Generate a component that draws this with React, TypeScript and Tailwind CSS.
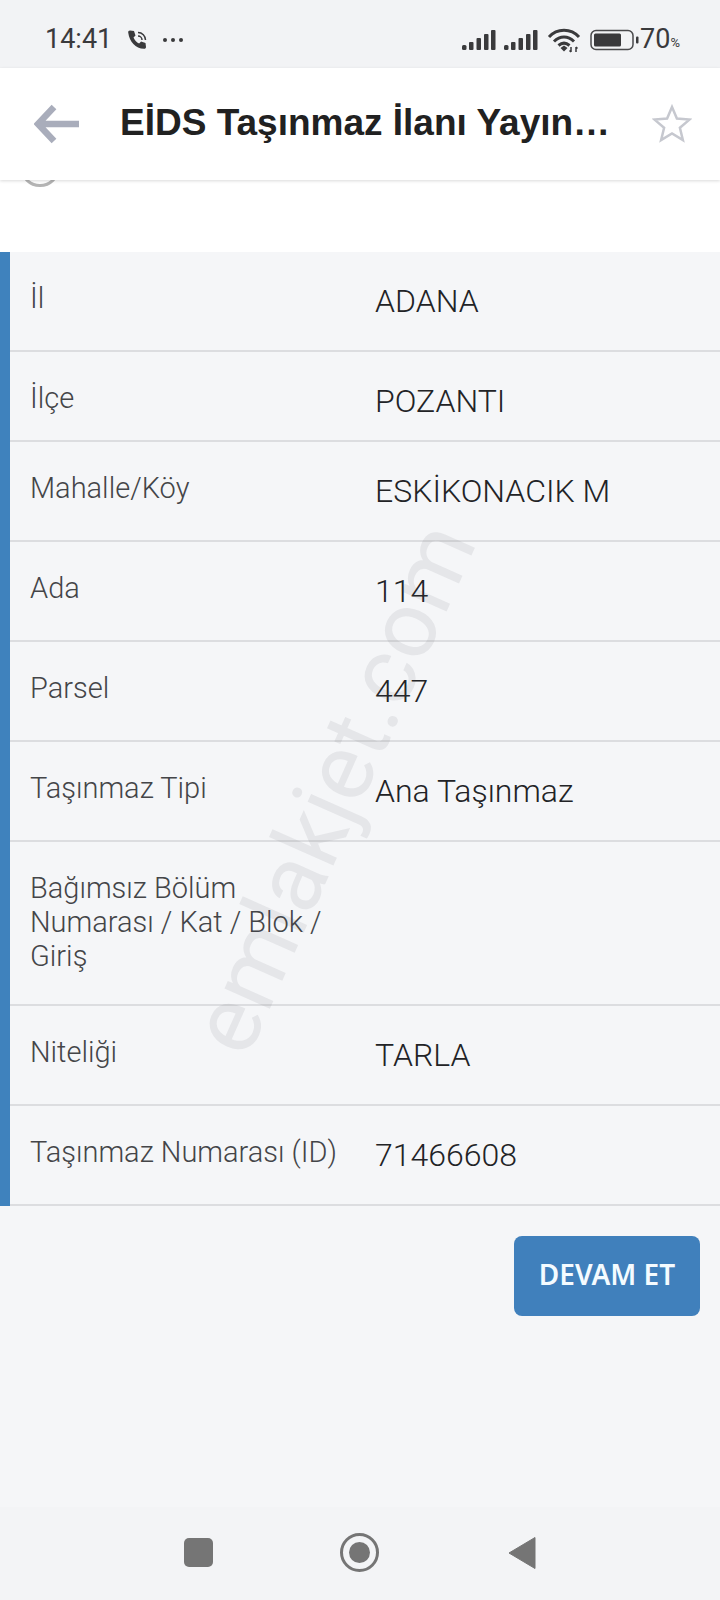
const rows = [
  { label: "İl", value: "ADANA", height: "h-[100px]" },
  { label: "İlçe", value: "POZANTI", height: "h-[90px]" },
  { label: "Mahalle/Köy", value: "ESKİKONACIK M", height: "h-[100px]" },
  { label: "Ada", value: "114", height: "h-[100px]" },
  { label: "Parsel", value: "447", height: "h-[100px]" },
  { label: "Taşınmaz Tipi", value: "Ana Taşınmaz", height: "h-[100px]" },
  { label: "Bağımsız Bölüm Numarası / Kat / Blok / Giriş", value: "", height: "h-[164px]" },
  { label: "Niteliği", value: "TARLA", height: "h-[100px]" },
  { label: "Taşınmaz Numarası (ID)", value: "71466608", height: "h-[100px]" },
];

function StatusBar() {
  return (
    <div className="flex h-[68px] items-center bg-[#f2f3f5] pl-[45px] pr-[40px] pt-[11px] text-[#3a3a3c]">
      <span className="font-['Roboto',sans-serif] text-[27px] leading-none">14:41</span>
      <svg width="22" height="22" viewBox="0 0 22 22" className="ml-[15px]">
        <path d="M3 1.500l4 .5 1.500 4.500-2 2c1 2.600 3 4.700 5.600 6l2-2 4.400 1.500.5 4c0 1.200-1 2-2 1.800C8.500 19.500 2.500 13 1.200 3.500 1 2.400 1.900 1.500 3 1.500z" fill="#3a3a3c" />
        <path d="M11 3.500a7.500 7.500 0 0 1 7.500 7.500M11 7a4 4 0 0 1 4 4" fill="none" stroke="#3a3a3c" strokeWidth="1.500" />
      </svg>
      <span className="ml-[14px] flex gap-[4px]">
        <i className="size-[4px] rounded-full bg-[#3a3a3c]" />
        <i className="size-[4px] rounded-full bg-[#3a3a3c]" />
        <i className="size-[4px] rounded-full bg-[#3a3a3c]" />
      </span>
      <div className="ml-auto flex items-center">
        <Signal />
        <span className="ml-[8px]"><Signal /></span>
        <svg width="34" height="26" viewBox="0 0 34 26" className="ml-[9px]">
          <path d="M2 10C10 1 24 1 32 10M7 14.500c6-6 14-6 20 0M11.500 18.500c3.500-3 7.500-3 11 0" fill="none" stroke="#3a3a3c" strokeWidth="3" />
          <path d="M13.500 21l3.500-2.500 3.500 2.500-3.500 3.500z" fill="#3a3a3c" />
          <path d="M24 20v5M22.500 23.500l1.500 1.500M29 25v-5M29 20l1.500 1.500" fill="none" stroke="#3a3a3c" strokeWidth="1.500" />
        </svg>
        <svg width="49" height="24" viewBox="0 0 49 24" className="ml-[9px]">
          <rect x="1" y="2.500" width="42" height="19" rx="5" fill="none" stroke="#4a4a4c" strokeWidth="1.500" />
          <rect x="4" y="5.500" width="27" height="13" rx="1.500" fill="#3a3a3c" />
          <rect x="46" y="8.500" width="2.500" height="7" rx="1" fill="#3a3a3c" />
        </svg>
        <span className="ml-[1px] font-['Roboto',sans-serif] text-[27px] leading-none">70</span>
        <span className="mt-[6px] font-['Roboto',sans-serif] text-[13px] leading-none">%</span>
      </div>
    </div>
  );
}

function Signal() {
  return (
    <svg width="34" height="22" viewBox="0 0 34 22" className="block">
      <rect x="0" y="16" width="4.500" height="5" rx="1.500" fill="#3a3a3c" />
      <rect x="7" y="13" width="4.500" height="8" rx="1" fill="#3a3a3c" />
      <rect x="14.500" y="9" width="4.500" height="12" rx="1" fill="#3a3a3c" />
      <rect x="22" y="5" width="4.500" height="16" rx="1" fill="#3a3a3c" />
      <rect x="29" y="1" width="4.500" height="20" rx="1" fill="#3a3a3c" />
    </svg>
  );
}

function Header() {
  return (
    <div className="relative z-10 flex h-[112px] items-center bg-white shadow-[0_1px_3px_rgba(0,0,0,0.15)]">
      <svg width="46" height="40" viewBox="0 0 46 40" className="ml-[34px]">
        <path d="M20 3L4 20l16 17M5 20h40" fill="none" stroke="#a9adbb" strokeWidth="6.500" />
      </svg>
      <h1 className="mb-[3px] ml-[40px] w-[490px] whitespace-nowrap font-['Liberation_Sans',sans-serif] text-[37px] font-bold leading-none text-[#212121]">
        EİDS Taşınmaz İlanı Yayın…
      </h1>
      <svg width="40" height="40" viewBox="0 0 40 40" className="ml-[42px]">
        <path d="M20 3l4.900 11.600 12.600 1-9.600 8.200 3 12.300L20 29.500 9.100 36.100l3-12.300-9.600-8.200 12.600-1z" fill="none" stroke="#c6c8cf" strokeWidth="2.500" />
      </svg>
    </div>
  );
}

export default function App() {
  return (
    <div className="relative flex h-[1600px] w-[720px] flex-col overflow-hidden bg-[#f5f6f8] font-['Roboto',sans-serif]">
      <StatusBar />
      <Header />
      <div className="relative h-[72px] overflow-hidden bg-white">
        <div className="absolute left-[20px] top-[-33px] size-[40px] rounded-full border-[3px] border-[#b4b4b4]" />
      </div>

      <div className="border-l-[10px] border-[#3f82bd]">
        {rows.map((row) => (
          <div key={row.label} className={`flex border-b-2 border-[#dcdde0] ${row.height}`}>
            <div className="w-[365px] pl-[20px] pr-[25px] pt-[29px] text-[29px] font-light leading-[34px] text-[#444548]">
              {row.label}
            </div>
            <div className="pt-[30px] text-[32px] font-light leading-[38px] text-[#222326]">
              {row.value}
            </div>
          </div>
        ))}
      </div>

      <div className="flex justify-end pr-[20px] pt-[30px]">
        <button className="h-[80px] w-[186px] rounded-[8px] bg-[#4080bc] pb-[4px] font-['Noto_Sans',sans-serif] text-[28px] font-semibold text-[#f4fbff]">
          DEVAM ET
        </button>
      </div>

      <div className="mt-auto flex h-[93px] items-start justify-center bg-[#f3f4f6] pt-[31px]">
        <div className="size-[29px] rounded-[5px] bg-[#757575]" />
        <div className="ml-[127px] flex size-[39px] -translate-y-[5px] items-center justify-center rounded-full border-[3.500px] border-[#757575]">
          <div className="size-[21px] rounded-full bg-[#757575]" />
        </div>
        <svg width="28" height="34" viewBox="0 0 28 34" className="ml-[129px] -translate-y-[2px]">
          <path d="M27 1.500v31L1 17z" fill="#757575" stroke="#757575" strokeLinejoin="round" />
        </svg>
      </div>

      <div className="pointer-events-none absolute left-[333px] top-[788px] -translate-x-1/2 -translate-y-1/2 -rotate-[66deg] whitespace-nowrap text-[94px] font-normal leading-none text-[#50505a]/[0.09]">
        emlakjet.com
      </div>
    </div>
  );
}
